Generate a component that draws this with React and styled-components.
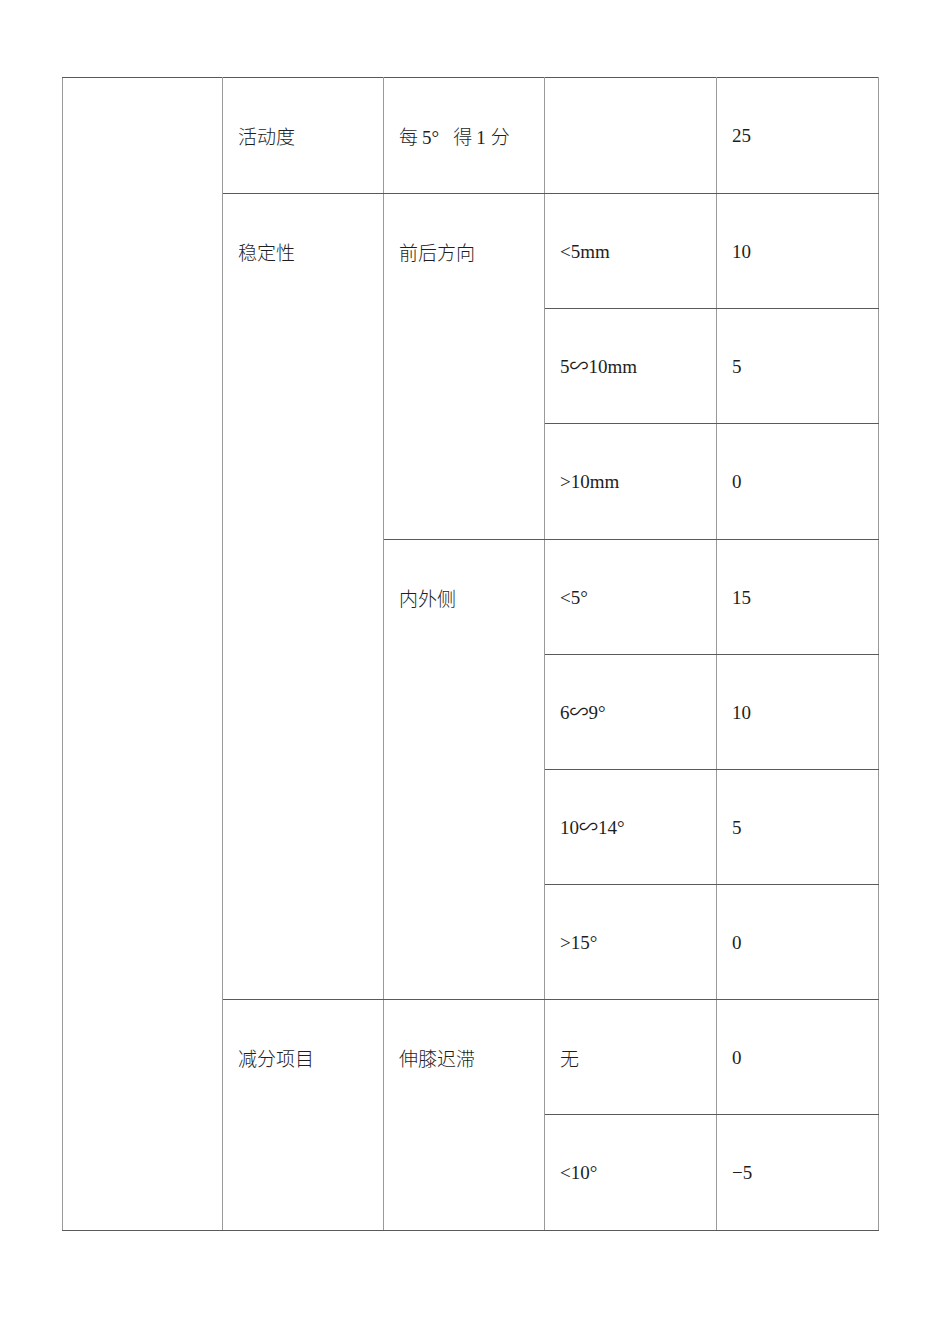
import React from 'react'
import styled, { createGlobalStyle } from 'styled-components'

const GlobalStyle = createGlobalStyle`
    body {
        margin: 0;
        background: #ffffff;
    }
`

const Page = styled.div`
    width: 950px;
    min-height: 1344px;
    padding: 77px 0 0 62px;
    box-sizing: border-box;
    font-family: "Liberation Serif", "Noto Sans CJK SC", serif;
    color: #1e1e1e;
`

const Table = styled.table`
    border-collapse: collapse;
    table-layout: fixed;
    width: 816px;
`

const Row = styled.tr`
    height: ${(p) => p.h}px;
`

const Cell = styled.td`
    border-top: 1px solid #5a5a5a;
    border-bottom: 1px solid #5a5a5a;
    border-left: 1px solid #9a9a9a;
    border-right: 1px solid #9a9a9a;
    vertical-align: top;
    padding: 47px 0 0 15px;
    font-size: 19px;
    line-height: 22px;
    white-space: nowrap;
`

const Cjk = styled.span`
    font-family: "Noto Sans CJK SC", sans-serif;
    font-size: 19px;
    font-weight: 300;
`

const Gap = styled.span`
    display: inline-block;
    width: ${(p) => p.w}px;
`

const rowHeights = [116, 115, 115, 116, 115, 115, 115, 115, 115, 116]

const App = () => {
    return (
        <Page>
            <GlobalStyle />
            <Table>
                <colgroup>
                    <col style={{ width: 160 }} />
                    <col style={{ width: 161 }} />
                    <col style={{ width: 161 }} />
                    <col style={{ width: 172 }} />
                    <col style={{ width: 162 }} />
                </colgroup>
                <tbody>
                    <Row h={rowHeights[0]}>
                        <Cell rowSpan={10} />
                        <Cell><Cjk>活动度</Cjk></Cell>
                        <Cell>
                            <Cjk>每</Cjk><Gap w={4} />5°<Gap w={14} /><Cjk>得</Cjk><Gap w={4} />1<Gap w={5} /><Cjk>分</Cjk>
                        </Cell>
                        <Cell />
                        <Cell>25</Cell>
                    </Row>
                    <Row h={rowHeights[1]}>
                        <Cell rowSpan={7}><Cjk>稳定性</Cjk></Cell>
                        <Cell rowSpan={3}><Cjk>前后方向</Cjk></Cell>
                        <Cell>&lt;5mm</Cell>
                        <Cell>10</Cell>
                    </Row>
                    <Row h={rowHeights[2]}>
                        <Cell>5∽10mm</Cell>
                        <Cell>5</Cell>
                    </Row>
                    <Row h={rowHeights[3]}>
                        <Cell>&gt;10mm</Cell>
                        <Cell>0</Cell>
                    </Row>
                    <Row h={rowHeights[4]}>
                        <Cell rowSpan={4}><Cjk>内外侧</Cjk></Cell>
                        <Cell>&lt;5°</Cell>
                        <Cell>15</Cell>
                    </Row>
                    <Row h={rowHeights[5]}>
                        <Cell>6∽9°</Cell>
                        <Cell>10</Cell>
                    </Row>
                    <Row h={rowHeights[6]}>
                        <Cell>10∽14°</Cell>
                        <Cell>5</Cell>
                    </Row>
                    <Row h={rowHeights[7]}>
                        <Cell>&gt;15°</Cell>
                        <Cell>0</Cell>
                    </Row>
                    <Row h={rowHeights[8]}>
                        <Cell rowSpan={2}><Cjk>减分项目</Cjk></Cell>
                        <Cell rowSpan={2}><Cjk>伸膝迟滞</Cjk></Cell>
                        <Cell><Cjk>无</Cjk></Cell>
                        <Cell>0</Cell>
                    </Row>
                    <Row h={rowHeights[9]}>
                        <Cell>&lt;10°</Cell>
                        <Cell>−5</Cell>
                    </Row>
                </tbody>
            </Table>
        </Page>
    )
}

export default App
